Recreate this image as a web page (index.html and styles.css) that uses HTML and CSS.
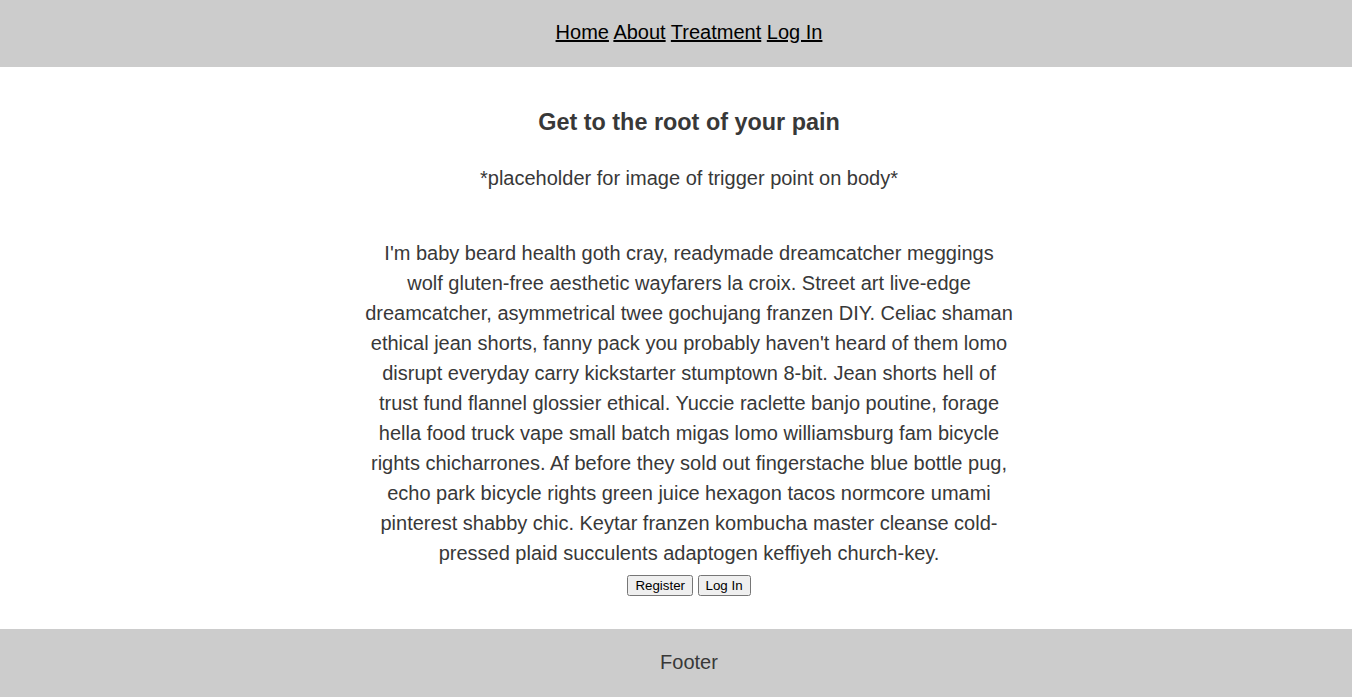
FILE: index.html
```html
<!DOCTYPE html>
<html>
<head>
<meta charset="utf-8">
<link rel="stylesheet" href="styles.css">
</head>
<body>
<header class="site-header">
  <nav class="nav"><a href="#">Home</a> <a href="#">About</a> <a href="#">Treatment</a> <a href="#">Log In</a></nav>
</header>
<main class="main">
  <h1 class="title">Get to the root of your pain</h1>
  <p class="placeholder">*placeholder for image of trigger point on body*</p>
  <p class="intro">I'm baby beard health goth cray, readymade dreamcatcher meggings wolf gluten-free aesthetic wayfarers la croix. Street art live-edge dreamcatcher, asymmetrical twee gochujang franzen DIY. Celiac shaman ethical jean shorts, fanny pack you probably haven't heard of them lomo disrupt everyday carry kickstarter stumptown 8-bit. Jean shorts hell of trust fund flannel glossier ethical. Yuccie raclette banjo poutine, forage hella food truck vape small batch migas lomo williamsburg fam bicycle rights chicharrones. Af before they sold out fingerstache blue bottle pug, echo park bicycle rights green juice hexagon tacos normcore umami pinterest shabby chic. Keytar franzen kombucha master cleanse cold-pressed plaid succulents adaptogen keffiyeh church-key.</p>
  <div class="actions"><button>Register</button> <button>Log In</button></div>
</main>
<footer class="site-footer">Footer</footer>
</body>
</html>
```
FILE: styles.css
```css
html, body { margin: 0; padding: 0; }
body {
  font-family: "Liberation Sans", Arial, sans-serif;
  color: #383838;
  background: #fff;
  display: flex;
  flex-direction: column;
  min-height: 697px;
}
.site-header {
  background: #ccc;
  height: 67px;
  display: flex;
  align-items: center;
  justify-content: center;
  padding-left: 26px;
  padding-bottom: 2px;
  box-sizing: border-box;
}
.nav { font-size: 20px; line-height: 23px; }
.nav a { color: #000; text-decoration: underline; }
.main {
  flex: 1;
  display: flex;
  flex-direction: column;
  align-items: center;
  text-align: center;
  padding-left: 26px;
}
.title {
  font-size: 23.4px;
  line-height: 28px;
  font-weight: bold;
  margin: 41px 0 0;
}
.placeholder {
  font-size: 20px;
  line-height: 24px;
  margin: 30px 0 0;
}
.intro {
  font-size: 20px;
  line-height: 30px;
  max-width: 650px;
  margin: 48px 0 0;
}
.actions { margin-top: 7px; }
.actions button {
  font-family: "Liberation Sans", Arial, sans-serif;
  font-size: 13.33px;
}
.site-footer {
  background: #ccc;
  height: 68px;
  display: flex;
  align-items: center;
  justify-content: center;
  padding-left: 26px;
  padding-bottom: 2px;
  box-sizing: border-box;
  font-size: 20px;
}
```
